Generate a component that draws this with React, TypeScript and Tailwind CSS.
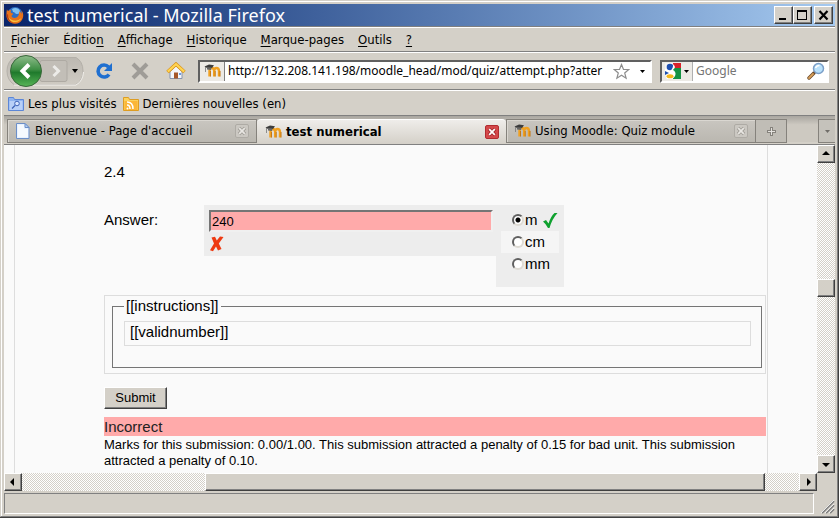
import React from "react";

const raised =
  "border border-t-white border-l-white border-r-[#404040] border-b-[#404040] bg-[#d4d0c8] shadow-[inset_-1px_-1px_0_#808080]";
const sunken =
  "border-2 border-t-[#606060] border-l-[#606060] border-r-white border-b-white bg-white";
const checker =
  "bg-[conic-gradient(#d4d0c8_25%,#fff_0_50%,#d4d0c8_0_75%,#fff_0)] bg-[length:2px_2px]";

function FirefoxIcon() {
  return (
    <svg width="18" height="18" viewBox="0 0 18 18" aria-hidden="true">
      <circle cx="9" cy="8.5" r="7.5" fill="#2d6fc4" />
      <path d="M6 3c3-2 7-1 8 2 0 2-1 3-3 3-2 0-2-2-4-2z" fill="#7fc0ee" />
      <path
        d="M1 3c0 1 .6 1.500 1 2C3 4 4 4 5 4c-.5 1-.5 2 0 3l2 .5C7 9 5.500 9 5.500 10c.5 2 3 2.500 5 1.500 2-1.200 3-3.500 2.500-6C15 6 15.500 7 15.500 8.500 16 6.500 15.600 5 15 4c2.500 2.500 3 6.500 1.200 9.500C14.500 16.500 12 17.700 9 17.700 4 17.700.4 14 .4 9.300.3 7 .6 5 1 3z"
        fill="#e8731a"
      />
      <path d="M1.500 9c0 4 3.500 7.500 8 7 3 0 5-2 6-4-2 2-5 3-8 2.500C4.500 14 2.500 12 1.500 9z" fill="#f8c13c" />
      <path d="M.6 8c-.2 5 3 9 8 9.600C4.500 16 2.200 13 2 8.500z" fill="#b53a12" />
    </svg>
  );
}

function MoodleIcon() {
  return (
    <svg width="17" height="16" viewBox="0 0 17 16" aria-hidden="true">
      <path
        d="M5.500 13.500V8Q5.500 5 7.800 5T10.200 8V13.500M10.200 8Q10.200 5 12.500 5T15 8V13.500"
        fill="none"
        stroke="#f0a020"
        strokeWidth="2.400"
      />
      <path d="M6.500 8v5.500M11.200 8v5.500M16 8v5.500" stroke="#b8690c" strokeWidth=".8" />
      <path d="M.5 3.500 5 1.500l5 .7L8 5 2.500 4.800z" fill="#3c3c3c" />
      <path d="M3 4.500v2l4 .5.500-2.500z" fill="#666" />
      <path d="M1.500 4v5" stroke="#777" strokeWidth=".8" />
    </svg>
  );
}

function PageIcon() {
  return (
    <svg width="14" height="16" viewBox="0 0 14 16" aria-hidden="true">
      <path d="M.5.5h8.500l4 4v11H.5z" fill="#e8f2ff" stroke="#6c8fc8" />
      <path d="M2 2h6v4h4v8H2z" fill="#fff" opacity=".6" />
      <path d="M9 .5v4h4z" fill="#b9d2f5" stroke="#6c8fc8" />
    </svg>
  );
}

function BackForward() {
  return (
    <svg width="78" height="34" viewBox="0 0 78 34" aria-hidden="true">
      <defs>
        <linearGradient id="green" x1="0" y1="0" x2="0" y2="1">
          <stop offset="0" stopColor="#8fbd8c" />
          <stop offset=".45" stopColor="#3f8f45" />
          <stop offset=".55" stopColor="#1f7a2c" />
          <stop offset="1" stopColor="#58b558" />
        </linearGradient>
        <linearGradient id="pill" x1="0" y1="0" x2="0" y2="1">
          <stop offset="0" stopColor="#bcb8b1" />
          <stop offset="1" stopColor="#cfcbc3" />
        </linearGradient>
      </defs>
      <path d="M8 3.500h62q7 4 7 13.500t-7 13.500H8Q1 26 1 17T8 3.500z" fill="url(#pill)" stroke="#b4b0a9" />
      <path d="M8 31h62q7-4 7.500-13" fill="none" stroke="#f3f1ed" />
      <rect x="34" y="6.500" width="27" height="21" rx="2" fill="#c2beb7" stroke="#aeaaa3" />
      <circle cx="20" cy="17" r="15.500" fill="url(#green)" stroke="#39683b" />
      <path d="M23 10.500 16.500 17l6.500 6.500" fill="none" stroke="#fff" strokeWidth="4" />
      <path d="m47.500 12 5 5-5 5" fill="none" stroke="#ecebe8" strokeWidth="3" />
      <path d="M66 15h6l-3 4z" fill="#000" />
    </svg>
  );
}

function Caret() {
  return (
    <svg width="5" height="3" viewBox="0 0 5 3" aria-hidden="true" className="shrink-0">
      <path d="M0 0h5L2.500 3z" fill="#000" />
    </svg>
  );
}

function Menu({ before = "", accessKey, after = "" }: { before?: string; accessKey: string; after?: string }) {
  return (
    <button type="button" className="whitespace-nowrap">
      {before}
      <span className="underline underline-offset-2">{accessKey}</span>
      {after}
    </button>
  );
}

function CloseTab({ active = false }: { active?: boolean }) {
  return (
    <button type="button" aria-label="Fermer l'onglet" className="shrink-0">
      <svg width="14" height="14" viewBox="0 0 14 14" aria-hidden="true">
        <rect x=".5" y=".5" width="13" height="13" rx="1.500" fill={active ? "#d4484a" : "#cbc8c2"} stroke={active ? "#b02c30" : "#aeaba5"} />
        <path d="m4 4 6 6M10 4l-6 6" stroke={active ? "#a52a2e" : "#a19e98"} strokeWidth="3.400" />
        <path d="m4.200 4.200 5.600 5.600M9.800 4.200 4.200 9.800" stroke={active ? "#fff" : "#e9e7e3"} strokeWidth="1.700" />
      </svg>
    </button>
  );
}

function Tab({ icon, title, active = false }: { icon: React.ReactNode; title: string; active?: boolean }) {
  return (
    <div
      className={
        active
          ? "flex h-[25px] w-[249px] items-center gap-1 rounded-t border-t border-white bg-linear-to-b from-[#efedea] to-[#d4d0c8] pr-[7px] pl-2 font-bold"
          : "flex h-6 w-[250px] items-center gap-1 border border-[#85827c] bg-linear-to-b from-[#c9c6c0] to-[#bab7b0] pr-[7px] pl-[7px] shadow-[inset_1px_1px_0_#dad7d1]"
      }
    >
      {icon}
      <span className="grow whitespace-nowrap">{title}</span>
      <CloseTab active={active} />
    </div>
  );
}

function ScrollButton({ d, label }: { d: string; label: string }) {
  return (
    <button type="button" aria-label={label} className={`flex size-[18px] shrink-0 items-center justify-center ${raised}`}>
      <svg width="8" height="8" viewBox="0 0 8 8" aria-hidden="true">
        <path d={d} fill="#000" />
      </svg>
    </button>
  );
}

function Unit({ label, checked = false, highlight = false }: { label: string; checked?: boolean; highlight?: boolean }) {
  return (
    <label className={`flex h-[22px] items-center pl-[11px] ${highlight ? "bg-[#f5f5f5]" : ""}`}>
      <input
        type="radio"
        name="unit"
        defaultChecked={checked}
        className="size-3 appearance-none rounded-full border-2 border-t-[#606060] border-r-[#dedbd4] border-b-[#dedbd4] border-l-[#606060] bg-white checked:bg-[radial-gradient(circle,#000_2px,#fff_3px)]"
      />
      <span className="pl-px">{label}</span>
      {checked && (
        <svg width="16" height="18" viewBox="0 0 16 18" className="ml-1" role="img" aria-label="Correct">
          <path d="M1 10.500 4 9l2.500 3.500Q9 5 12.500 2L15.500 2Q10 8 7.500 17H6Q4 13 1 10.500z" fill="#0fa12f" />
        </svg>
      )}
    </label>
  );
}

export default function App() {
  return (
    <div className="flex h-screen w-full flex-col overflow-hidden border-r border-b border-[#404040] bg-[#d4d0c8] font-['DejaVu_Sans_Condensed','DejaVu_Sans',sans-serif] text-[13px] leading-4 text-black">
      <div className="flex min-h-0 grow flex-col border border-t-[#d4d0c8] border-r-[#808080] border-b-[#808080] border-l-[#d4d0c8]">
        <div className="flex min-h-0 grow flex-col border-t border-l border-white pt-0.5 pr-0.5 pb-0.5 pl-0.5">
          <header className="flex h-[22px] shrink-0 items-center bg-linear-to-r from-[#0a246a] to-[#a6caf0] pr-0.5 pl-0.5">
            <FirefoxIcon />
            <h1 className="grow pl-[3px] font-['Noto_Sans',sans-serif] text-lg leading-[22px] whitespace-nowrap text-white">test numerical - Mozilla Firefox</h1>
            <button type="button" aria-label="Réduire" className={`h-[18px] w-[19px] ${raised}`}>
              <svg width="17" height="15" viewBox="0 0 17 15" aria-hidden="true">
                <path d="M4 10h7v2H4z" />
              </svg>
            </button>
            <button type="button" aria-label="Agrandir" className={`h-[18px] w-[19px] ${raised}`}>
              <svg width="17" height="15" viewBox="0 0 17 15" aria-hidden="true">
                <path d="M3 2h10v10H3zM4 4v7h8V4z" fillRule="evenodd" />
              </svg>
            </button>
            <button type="button" aria-label="Fermer" className={`ml-0.5 h-[18px] w-[19px] ${raised}`}>
              <svg width="17" height="15" viewBox="0 0 17 15" aria-hidden="true">
                <path d="m4.500 3 8 8.500M12.500 3l-8 8.500" stroke="#000" strokeWidth="2.200" />
              </svg>
            </button>
          </header>

          <nav className="flex h-[26px] shrink-0 items-center gap-3.5 border-t border-b border-t-[#808080] border-b-[#808080] pt-px pl-[7px] shadow-[inset_0_1px_0_#fff]">
            <Menu accessKey="F" after="ichier" />
            <Menu before="Éditio" accessKey="n" />
            <Menu accessKey="A" after="ffichage" />
            <Menu accessKey="H" after="istorique" />
            <Menu accessKey="M" after="arque-pages" />
            <Menu accessKey="O" after="utils" />
            <Menu accessKey="?" />
          </nav>

          <div className="flex h-[38px] shrink-0 items-center border-t border-b border-t-white border-b-[#808080] pr-1.5 pl-0.5">
            <button type="button" aria-label="Précédent">
              <BackForward />
            </button>
            <button type="button" aria-label="Actualiser" className="ml-[11px]">
              <svg width="18" height="18" viewBox="0 0 18 18" aria-hidden="true">
                <path d="M13.500 5A6 6 0 1 0 14 12.500" fill="none" stroke="#1f6fd0" strokeWidth="3.600" />
                <path d="M17 1v8H9z" fill="#1f6fd0" />
              </svg>
            </button>
            <button type="button" aria-label="Arrêter" className="ml-[18px]">
              <svg width="18" height="18" viewBox="0 0 18 18" aria-hidden="true">
                <path d="m2 2 14 14M16 2 2 16" stroke="#9f9c97" strokeWidth="4" />
              </svg>
            </button>
            <button type="button" aria-label="Accueil" className="ml-[17px]">
              <svg width="20" height="18" viewBox="0 0 20 18" aria-hidden="true">
                <path d="M4 9.500 10 4l6 5.500v7H4z" fill="#f4f6fb" stroke="#8593ad" />
                <path d="M1.500 10 10 2.200 18.500 10" fill="none" stroke="#d99118" strokeWidth="3.600" />
                <path d="M1.800 9.600 10 2.200l8.200 7.400" fill="none" stroke="#ffd452" strokeWidth="2.200" />
                <path d="M8 10.500h4v6H8z" fill="#a5572a" />
                <path d="M13 11h2v2h-2z" fill="#6b9be0" />
              </svg>
            </button>
            <div className={`ml-3 flex h-[23px] grow items-center pr-[5px] ${sunken}`}>
              <span className="flex h-full w-[25px] items-center justify-center border-r border-[#808080] bg-[#eceae6]">
                <MoodleIcon />
              </span>
              <input
                aria-label="Adresse"
                className="ml-[3px] w-0 grow bg-transparent font-['Noto_Sans',sans-serif] text-xs outline-none"
                defaultValue="http://132.208.141.198/moodle_head/mod/quiz/attempt.php?atter"
              />
              <svg width="17" height="17" viewBox="0 0 17 17" aria-hidden="true" className="mr-2.5">
                <path d="m8.500 1.500 2 5h5.200l-4 3.500 1.400 5.200-4.600-3-4.600 3L5.300 10l-4-3.500h5.200z" fill="#fff" stroke="#8d8d8d" strokeWidth="1.200" />
              </svg>
              <Caret />
            </div>
            <div className={`ml-2 flex h-[23px] w-[169px] shrink-0 items-center pr-0.5 ${sunken}`}>
              <span className="flex h-full w-[31px] shrink-0 items-center gap-[3px] border-r border-[#b0b0b0] bg-[#eceae6] pl-[3px]">
                <svg width="16" height="16" viewBox="0 0 16 16" aria-hidden="true">
                  <path d="M0 0h9v6H0z" fill="#f4f4f4" />
                  <path d="M8 0h8v6H8z" fill="#d9222a" />
                  <path d="M8 5h8v11H8z" fill="#149343" />
                  <path d="M0 6h8v5H0z" fill="#fff" />
                  <circle cx="5" cy="4" r="3.300" fill="#1d4fb0" />
                  <path d="M8 1c3 3 2 4 0 6 4 2 3 7-1 9H2C-1 12 1 9 6 9 4 8 9 6 8 1z" fill="#fff" />
                  <path d="M0 8l4 2-4 2z" fill="#1d4fb0" />
                  <ellipse cx="5" cy="13.300" rx="3.500" ry="2" fill="#f5b81c" />
                </svg>
                <Caret />
              </span>
              <input aria-label="Recherche" placeholder="Google" className="ml-[3px] w-0 grow bg-transparent font-['Noto_Sans',sans-serif] text-xs outline-none placeholder:text-[#757575]" />
              <svg width="18" height="18" viewBox="0 0 18 18" aria-hidden="true">
                <path d="m2 16 5-5" stroke="#6b4a2a" strokeWidth="3.400" strokeLinecap="round" />
                <path d="m2 16 4-4" stroke="#d8a05a" strokeWidth="1.800" strokeLinecap="round" />
                <circle cx="11.500" cy="6.500" r="5" fill="#b9e1fb" stroke="#7b9fc8" strokeWidth="1.500" />
                <path d="M8.500 6q1-2.500 4-2.500" stroke="#fff" strokeWidth="1.500" fill="none" />
              </svg>
            </div>
          </div>

          <div className="flex h-[25px] shrink-0 items-center border-t border-white pt-0.5 pl-1">
            <button type="button" className="flex items-center gap-1 whitespace-nowrap">
              <svg width="16" height="14" viewBox="0 0 16 14" aria-hidden="true">
                <path d="M.5.500h5l1 2h9v11H.5z" fill="#8fb4f0" stroke="#5c86d6" />
                <path d="M1.500 4h13v9h-13z" fill="#b8d0f8" />
                <circle cx="9" cy="6.500" r="2.300" fill="#d8e6ff" stroke="#3b62b8" />
                <path d="m7 8.500-3 3" stroke="#3b62b8" strokeWidth="1.300" />
              </svg>
              Les plus visités
            </button>
            <button type="button" className="ml-1.5 flex items-center gap-1 whitespace-nowrap">
              <svg width="16" height="14" viewBox="0 0 16 14" aria-hidden="true">
                <path d="M.5.500h5l1 2h9v11H.5z" fill="#fbd25c" stroke="#dd9c22" />
                <path d="M1.500 4h13v9h-13z" fill="#fbb637" />
                <path d="M4 5q6 0 6 7M4 8q3 0 3 4" fill="none" stroke="#fff" strokeWidth="1.500" />
                <circle cx="4.500" cy="11.500" r="1" fill="#fff" />
              </svg>
              Dernières nouvelles (en)
            </button>
          </div>

          <div className="flex h-[30px] shrink-0 items-start border-t border-[#808080] bg-linear-to-b from-[#a9a6a0] to-[#cdc9c1] to-30%">
            <div className="flex h-[29px] w-full items-start border-b border-[#808080] pt-[3px] pl-[3px] shadow-[inset_0_-2px_0_#d4d0c8]">
              <Tab icon={<span className="px-px"><PageIcon /></span>} title="Bienvenue - Page d'accueil" />
              <Tab active icon={<MoodleIcon />} title="test numerical" />
              <Tab icon={<MoodleIcon />} title="Using Moodle: Quiz module" />
              <button type="button" aria-label="Nouvel onglet" className="flex h-6 w-[31px] items-center justify-center border border-l-0 border-[#85827c] bg-[#c0bdb6]">
                <svg width="9" height="9" viewBox="0 0 9 9" aria-hidden="true">
                  <path d="M3 0h3v3h3v3H6v3H3V6H0V3h3z" fill="#85827c" />
                  <path d="M4 1h1v3h3v1H5v3H4V5H1V4h3z" fill="#e4e2de" />
                </svg>
              </button>
              <button type="button" aria-label="Liste des onglets" className="ml-auto flex h-6 w-[17px] items-center justify-center border border-r-0 border-[#85827c] bg-[#c5c2bb]">
                <svg width="5" height="3" viewBox="0 0 5 3" aria-hidden="true">
                  <path d="M0 0h5L2.500 3z" fill="#706d68" />
                </svg>
              </button>
            </div>
          </div>

          <div className="flex min-h-0 grow">
            <div className="flex min-w-0 grow flex-col">
              <main className="min-h-0 grow overflow-hidden bg-[#fafafa] pr-[49px] pl-2.5 font-['Liberation_Sans',Arial,sans-serif] text-[15px] leading-5">
                <div className="h-full border-r border-l border-[#dddddd] pt-[17px] pr-px pl-[89px]">
                  <p>2.4</p>
                  <div className="mt-[23px] flex items-start">
                    <label htmlFor="answer" className="w-[100px] pt-[5px]">
                      Answer:
                    </label>
                    <div className="h-[51px] w-[292px] bg-[#ededed] pt-[5px] pl-[5px]">
                      <input
                        id="answer"
                        defaultValue="240"
                        className="block h-[22px] w-[284px] border-2 border-t-[#757575] border-r-[#f0f0f0] border-b-[#f0f0f0] border-l-[#757575] bg-[#ffaaaa] pl-px text-[13px] leading-4 outline-none"
                      />
                      <svg width="16" height="16" viewBox="0 0 16 16" className="mt-1" role="img" aria-label="Incorrect">
                        <path d="M2.500 1.500 6 .8l1.800 3.700L11 .5 14.500 1 9.800 7.500 12.500 13l-3.500 1.500L7 10.500l-3 4.700-3-1L5 7.500z" fill="#ee3a12" />
                      </svg>
                    </div>
                    <fieldset className="h-[82px] w-[68px] bg-[#ededed] px-[5px] pt-1">
                      <Unit label="m" checked />
                      <Unit label="cm" highlight />
                      <Unit label="mm" />
                    </fieldset>
                  </div>
                  <div className="mt-2 h-[79px] border border-[#dddddd] pr-[3px] pl-[7px]">
                    <fieldset className="h-[72px] border border-[#757575] pr-2.5 pl-[11px]">
                      <legend className="px-0.5">[[instructions]]</legend>
                      <div className="mt-[5px] h-[25px] border border-[#dddddd] pl-[5px]">[[validnumber]]</div>
                    </fieldset>
                  </div>
                  <button type="button" className={`mt-[13px] block h-[22px] w-[63px] text-[13px] leading-4 ${raised}`}>
                    Submit
                  </button>
                  <div className="mt-2 h-[19px] bg-[#ffaaaa] text-[#222]">Incorrect</div>
                  <p className="pt-px text-[13px] leading-4">
                    Marks for this submission: 0.00/1.00. This submission attracted a penalty of 0.15 for bad unit. This submission attracted a penalty of 0.10.
                  </p>
                </div>
              </main>
              <div className={`flex h-[18px] shrink-0 ${checker}`}>
                <ScrollButton label="Défiler à gauche" d="M5 0v8L1 4z" />
                <div className="grow-[183]" />
                <div className={`grow-[560] ${raised}`} />
                <div className="grow-[34]" />
                <ScrollButton label="Défiler à droite" d="M3 0v8l4-4z" />
              </div>
            </div>
            <div className="flex w-[18px] shrink-0 flex-col">
              <div className={`flex grow flex-col ${checker}`}>
                <ScrollButton label="Défiler vers le haut" d="M0 5h8L4 1z" />
                <div className="grow-[116]" />
                <div className={`h-[18px] ${raised}`} />
                <div className="grow-[158]" />
                <ScrollButton label="Défiler vers le bas" d="M0 3h8L4 7z" />
              </div>
              <div className="h-[18px]" />
            </div>
          </div>

          <footer className="flex h-[23px] shrink-0 items-end pt-0.5">
            <div className="h-[21px] grow border border-t-[#808080] border-r-white border-b-white border-l-[#808080]" />
            <svg width="21" height="21" viewBox="0 0 21 21" aria-hidden="true">
              <path d="M8 20 20 8M12 20l8-8M16 20l4-4" stroke="#808080" strokeWidth="1.800" />
              <path d="M7 20 20 7M11 20l9-9M15 20l5-5" stroke="#fff" strokeWidth=".8" />
            </svg>
          </footer>
        </div>
      </div>
    </div>
  );
}
